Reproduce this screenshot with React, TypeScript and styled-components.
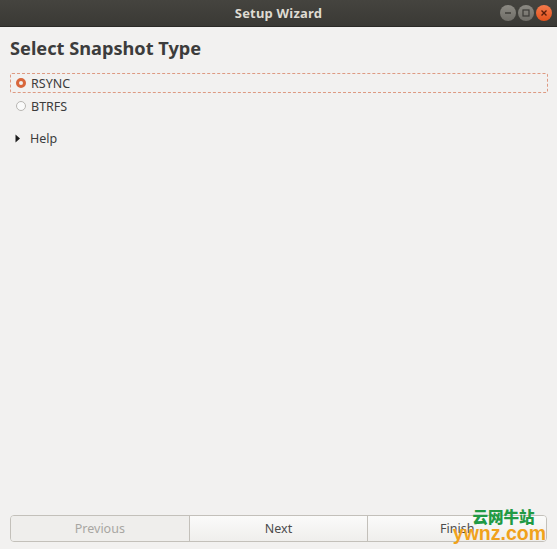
import styled, { createGlobalStyle } from 'styled-components';

const GlobalStyle = createGlobalStyle`
  html, body {
    margin: 0;
    padding: 0;
    background: #f2f1f0;
  }
  body {
    font-family: 'Noto Sans', 'DejaVu Sans', sans-serif;
  }
`;

const options = ['RSYNC', 'BTRFS'];
const selected = 'RSYNC';

const App = () => {
  return (
    <>
      <GlobalStyle />
      <Window>
        <TitleBar>
          <WindowTitle>Setup Wizard</WindowTitle>
          <Controls>
            <ControlButton>
              <svg width="8" height="8" viewBox="0 0 8 8">
                <path d="M1 4h6" stroke="#3b3a36" strokeWidth="1.4" />
              </svg>
            </ControlButton>
            <ControlButton>
              <svg width="8" height="8" viewBox="0 0 8 8">
                <rect x="1" y="1" width="6" height="6" fill="none" stroke="#3b3a36" strokeWidth="1.2" />
              </svg>
            </ControlButton>
            <ControlButton $close>
              <svg width="8" height="8" viewBox="0 0 8 8">
                <path d="M1.5 1.5l5 5M6.5 1.5l-5 5" stroke="#5a1d0a" strokeWidth="1.4" />
              </svg>
            </ControlButton>
          </Controls>
        </TitleBar>

        <Content>
          <Heading>Select Snapshot Type</Heading>
          <OptionList>
            {options.map((name) => (
              <OptionRow key={name} $focused={name === selected}>
                <Radio $checked={name === selected} />
                <OptionLabel>{name}</OptionLabel>
              </OptionRow>
            ))}
          </OptionList>
          <Expander>
            <svg width="6" height="9" viewBox="0 0 6 9">
              <path d="M0.5 0.5L5 4.5L0.5 8.5Z" fill="#1c1c1c" />
            </svg>
            <span>Help</span>
          </Expander>
        </Content>

        <ButtonBar>
          <NavButton disabled>Previous</NavButton>
          <NavButton>Next</NavButton>
          <NavButton>Finish</NavButton>
        </ButtonBar>

        <Watermark>
          <WatermarkCn>云网牛站</WatermarkCn>
          <WatermarkEn>ywnz.com</WatermarkEn>
        </Watermark>
      </Window>
    </>
  );
};

const Window = styled.div`
  position: relative;
  width: 557px;
  height: 549px;
  display: flex;
  flex-direction: column;
  background: #f2f1f0;
  overflow: hidden;
`;

const TitleBar = styled.div`
  position: relative;
  height: 26px;
  flex: none;
  display: flex;
  align-items: center;
  justify-content: center;
  background: linear-gradient(#45443f, #3a3935);
  border-bottom: 1px solid #2b2a27;
`;

const WindowTitle = styled.div`
  color: #dfdbd2;
  font-size: 13px;
  font-weight: 700;
  letter-spacing: 0.2px;
`;

const Controls = styled.div`
  position: absolute;
  right: 5px;
  top: 5px;
  display: flex;
  gap: 2px;
`;

const ControlButton = styled.div<{ $close?: boolean }>`
  width: 16px;
  height: 16px;
  border-radius: 50%;
  display: flex;
  align-items: center;
  justify-content: center;
  background: ${({ $close }) =>
    $close ? 'linear-gradient(#f47a4c, #e2521c)' : 'linear-gradient(#8c8a83, #6f6d67)'};
`;

const Content = styled.div`
  flex: 1;
  display: flex;
  flex-direction: column;
  padding: 9px 9px 0 10px;
`;

const Heading = styled.div`
  color: #3c3c3c;
  font-size: 18.2px;
  font-weight: 700;
  line-height: 24px;
  margin-bottom: 13px;
`;

const OptionList = styled.div`
  display: flex;
  flex-direction: column;
  gap: 3px;
`;

const OptionRow = styled.div<{ $focused?: boolean }>`
  height: 18px;
  display: flex;
  align-items: center;
  gap: 5px;
  padding-left: 5px;
  border: 1px dashed ${({ $focused }) => ($focused ? '#de9a82' : 'transparent')};
  border-radius: 2px;
`;

const Radio = styled.span<{ $checked?: boolean }>`
  box-sizing: border-box;
  width: 10px;
  height: 10px;
  border-radius: 50%;
  background: ${({ $checked }) => ($checked ? '#f0f0ee' : '#fafafa')};
  border: ${({ $checked }) => ($checked ? '3px solid #d8673c' : '1px solid #b8b6b2')};
`;

const OptionLabel = styled.span`
  color: #3c3c3c;
  font-size: 12.5px;
`;

const Expander = styled.div`
  display: flex;
  align-items: center;
  gap: 9px;
  margin-top: 14px;
  padding-left: 5px;
  color: #3c3c3c;
  font-size: 12.5px;
`;

const ButtonBar = styled.div`
  flex: none;
  display: flex;
  margin: 0 10px 7px 10px;
  height: 25px;
  border: 1px solid #c3c0ba;
  border-radius: 4px;
  overflow: hidden;
`;

const NavButton = styled.button`
  flex: 1;
  border: none;
  border-left: 1px solid #c3c0ba;
  margin: 0;
  padding: 0;
  font-family: inherit;
  font-size: 12.5px;
  color: #4c4c4c;
  background: linear-gradient(#fbfbfa, #efeeec);
  &:first-child {
    border-left: none;
  }
  &:disabled {
    color: #a8a6a2;
    background: #efeeec;
  }
`;

const Watermark = styled.div`
  position: absolute;
  right: 11px;
  bottom: 6px;
  display: flex;
  flex-direction: column;
  align-items: center;
  line-height: 1;
  pointer-events: none;
`;

const WatermarkCn = styled.div`
  color: #219a44;
  font-family: 'Noto Sans CJK SC', sans-serif;
  font-size: 15.5px;
  font-weight: 900;
  margin-left: 8px;
`;

const WatermarkEn = styled.div`
  color: #f0a21c;
  font-family: 'Liberation Sans', sans-serif;
  font-size: 19.5px;
  font-weight: 700;
  margin-top: -1px;
`;

export default App;
